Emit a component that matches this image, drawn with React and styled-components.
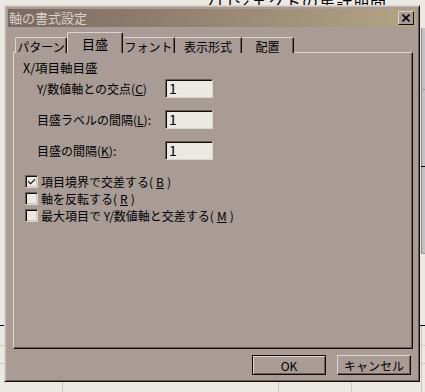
import styled, { createGlobalStyle } from 'styled-components';

const face = '#a99b95';
const light = '#ddd4cc';
const shadow = '#6c5c56';
const dark = '#140c0a';
const field = '#ece9e4';

const GlobalStyle = createGlobalStyle`
  html, body {
    margin: 0;
    padding: 0;
  }
  body {
    background: ${field};
    font-family: "Noto Sans CJK JP", "Noto Sans", sans-serif;
    font-size: 12px;
    color: #000;
  }
`;

const Desktop = styled.div`
  position: relative;
  width: 425px;
  height: 392px;
  overflow: hidden;
  background: ${field};
`;

const SheetTitle = styled.span`
  position: absolute;
  left: 200px;
  top: -11px;
  font-size: 16px;
  letter-spacing: 1px;
  color: #000;
`;

const SideStrip = styled.div`
  position: absolute;
  left: 421px;
  top: 28px;
  width: 10px;
  height: 225px;
  background: #c3c3c3;
  border-left: 1px solid #8a8a8a;
`;

const Rule = styled.div`
  position: absolute;
  left: ${({ $x }) => $x}px;
  top: ${({ $y }) => $y}px;
  width: ${({ $w }) => $w}px;
  height: ${({ $h }) => $h}px;
  background: ${({ $c }) => $c};
`;

const Dialog = styled.div`
  position: absolute;
  left: 4px;
  top: 5px;
  width: 416px;
  height: 377px;
  box-sizing: border-box;
  background: ${face};
  border-top: 1px solid ${light};
  border-left: 1px solid ${light};
  border-right: 1px solid ${dark};
  border-bottom: 1px solid ${dark};
  box-shadow: inset 1px 1px 0 #c9beb7, inset -1px -1px 0 ${shadow};
  padding: 3px;
  display: flex;
  flex-direction: column;
`;

const TitleBar = styled.div`
  height: 18px;
  display: flex;
  align-items: center;
  justify-content: space-between;
  padding: 0 2px 0 1px;
  background: linear-gradient(to right, #7b6961, #b3a484);
`;

const TitleText = styled.span`
  color: #d8d1ca;
  font-size: 13px;
  line-height: 18px;
`;

const CloseButton = styled.div`
  width: 16px;
  height: 14px;
  box-sizing: border-box;
  background: ${face};
  border-top: 1px solid ${light};
  border-left: 1px solid ${light};
  border-right: 1px solid ${dark};
  border-bottom: 1px solid ${dark};
  display: flex;
  align-items: center;
  justify-content: center;
`;

const Body = styled.div`
  flex: 1;
  display: flex;
  flex-direction: column;
  padding: 6px 3px 0 5px;
`;

const TabRow = styled.div`
  display: flex;
  align-items: flex-end;
  height: 20px;
  padding-left: 2px;
  position: relative;
  z-index: 1;
  margin-bottom: -1px;
`;

const Tab = styled.div`
  width: ${({ $w }) => $w}px;
  height: ${({ $active }) => ($active ? 21 : 16)}px;
  box-sizing: border-box;
  background: ${face};
  border-top: 1px solid ${light};
  border-left: ${({ $first, $active }) => ($first || $active ? `1px solid ${light}` : 'none')};
  border-right: 1px solid ${dark};
  border-radius: 2px 2px 0 0;
  box-shadow: inset -1px 0 0 ${shadow};
  display: flex;
  align-items: center;
  justify-content: center;
  font-size: ${({ $active }) => ($active ? 13 : 12)}px;
  padding-top: ${({ $active }) => ($active ? 0 : 1)}px;
`;

const Panel = styled.div`
  height: 297px;
  box-sizing: border-box;
  border-top: 1px solid ${light};
  border-left: 1px solid ${light};
  border-right: 1px solid ${dark};
  border-bottom: 1px solid ${dark};
  box-shadow: inset -1px -1px 0 ${shadow};
  padding: 8px 9px;
  display: flex;
  flex-direction: column;
`;

const GroupLabel = styled.div`
  line-height: 14px;
  font-size: 12.5px;
`;

const FieldList = styled.div`
  display: flex;
  flex-direction: column;
  gap: 12px;
  margin-top: 4px;
  padding-left: 14px;
`;

const FieldRow = styled.div`
  display: flex;
  align-items: center;
  height: 19px;
`;

const FieldLabel = styled.span`
  width: 128px;
  white-space: nowrap;
`;

const Input = styled.div`
  width: 48px;
  height: 19px;
  box-sizing: border-box;
  background: ${field};
  border-top: 1px solid ${shadow};
  border-left: 1px solid ${shadow};
  border-right: 1px solid ${light};
  border-bottom: 1px solid ${light};
  box-shadow: inset 1px 1px 0 ${dark};
  padding: 0 0 0 3px;
  font-size: 14px;
  line-height: 17px;
`;

const CheckList = styled.div`
  display: flex;
  flex-direction: column;
  gap: 4px;
  margin-top: 15px;
  padding-left: 2px;
`;

const CheckRow = styled.div`
  display: flex;
  align-items: center;
  gap: 3px;
  height: 13px;
  white-space: nowrap;
`;

const Box = styled.div`
  width: 13px;
  height: 13px;
  box-sizing: border-box;
  background: ${field};
  border-top: 1px solid ${shadow};
  border-left: 1px solid ${shadow};
  border-right: 1px solid ${light};
  border-bottom: 1px solid ${light};
  box-shadow: inset 1px 1px 0 ${dark}, inset -1px -1px 0 #cfc6bf;
  display: flex;
  align-items: center;
  justify-content: center;
`;

const Footer = styled.div`
  display: flex;
  justify-content: flex-end;
  gap: 11px;
  margin-top: 6px;
  padding-right: 2px;
`;

const Button = styled.div`
  width: 74px;
  height: 20px;
  box-sizing: border-box;
  background: ${face};
  border: 1px solid ${({ $default }) => ($default ? dark : light)};
  border-right-color: ${dark};
  border-bottom-color: ${dark};
  box-shadow: ${({ $default }) =>
    $default
      ? `inset 1px 1px 0 ${light}, inset -1px -1px 0 ${shadow}`
      : `inset -1px -1px 0 ${shadow}`};
  display: flex;
  align-items: center;
  justify-content: center;
  font-size: 12px;
`;

const U = styled.span`
  text-decoration: underline;
`;

const Check = () => (
  <svg width="9" height="9" viewBox="0 0 9 9">
    <path d="M1 3.5 L3.5 6 L8 1.5 L8 3 L3.5 7.5 L1 5 Z" fill="#000" />
  </svg>
);

const Cross = () => (
  <svg width="8" height="8" viewBox="0 0 8 8">
    <path d="M0.5 0.5 L7.5 7.5 M7.5 0.5 L0.5 7.5" stroke="#000" strokeWidth="1.6" />
  </svg>
);

const tabs = [
  { label: 'パターン', w: 52 },
  { label: '目盛', w: 56, active: true },
  { label: 'フォント', w: 52 },
  { label: '表示形式', w: 67 },
  { label: '配置', w: 52 },
];

const App = () => (
  <Desktop>
    <GlobalStyle />
    <SheetTitle>プロジェクトの集計期間</SheetTitle>
    <SideStrip />
    <Rule $x={421} $y={89} $w={4} $h={1} $c="#8f8fd8" />
    <Rule $x={421} $y={166} $w={4} $h={1} $c="#000" />
    <Rule $x={421} $y={253} $w={4} $h={1} $c="#999" />
    <Rule $x={0} $y={325} $w={425} $h={1} $c="#000" />
    <Rule $x={0} $y={345} $w={425} $h={1} $c="#c8c8c8" />
    <Rule $x={0} $y={363} $w={425} $h={1} $c="#c8c8c8" />
    <Rule $x={62} $y={326} $w={1} $h={66} $c="#c8c8c8" />
    <Rule $x={278} $y={326} $w={1} $h={66} $c="#c8c8c8" />
    <Rule $x={351} $y={326} $w={1} $h={66} $c="#c8c8c8" />
    <Rule $x={421} $y={326} $w={1} $h={66} $c="#c8c8c8" />

    <Dialog>
      <TitleBar>
        <TitleText>軸の書式設定</TitleText>
        <CloseButton>
          <Cross />
        </CloseButton>
      </TitleBar>
      <Body>
        <TabRow>
          {tabs.map((t, i) => (
            <Tab key={t.label} $w={t.w} $active={t.active} $first={i === 0}>
              {t.label}
            </Tab>
          ))}
        </TabRow>
        <Panel>
          <GroupLabel>X/項目軸目盛</GroupLabel>
          <FieldList>
            <FieldRow>
              <FieldLabel>Y/数値軸との交点(<U>C</U>)</FieldLabel>
              <Input>1</Input>
            </FieldRow>
            <FieldRow>
              <FieldLabel>目盛ラベルの間隔(<U>L</U>):</FieldLabel>
              <Input>1</Input>
            </FieldRow>
            <FieldRow>
              <FieldLabel>目盛の間隔(<U>K</U>):</FieldLabel>
              <Input>1</Input>
            </FieldRow>
          </FieldList>
          <CheckList>
            <CheckRow>
              <Box>
                <Check />
              </Box>
              項目境界で交差する(<U>B</U>)
            </CheckRow>
            <CheckRow>
              <Box />
              軸を反転する(<U>R</U>)
            </CheckRow>
            <CheckRow>
              <Box />
              最大項目で Y/数値軸と交差する(<U>M</U>)
            </CheckRow>
          </CheckList>
        </Panel>
        <Footer>
          <Button $default>OK</Button>
          <Button>キャンセル</Button>
        </Footer>
      </Body>
    </Dialog>
  </Desktop>
);

export default App;
